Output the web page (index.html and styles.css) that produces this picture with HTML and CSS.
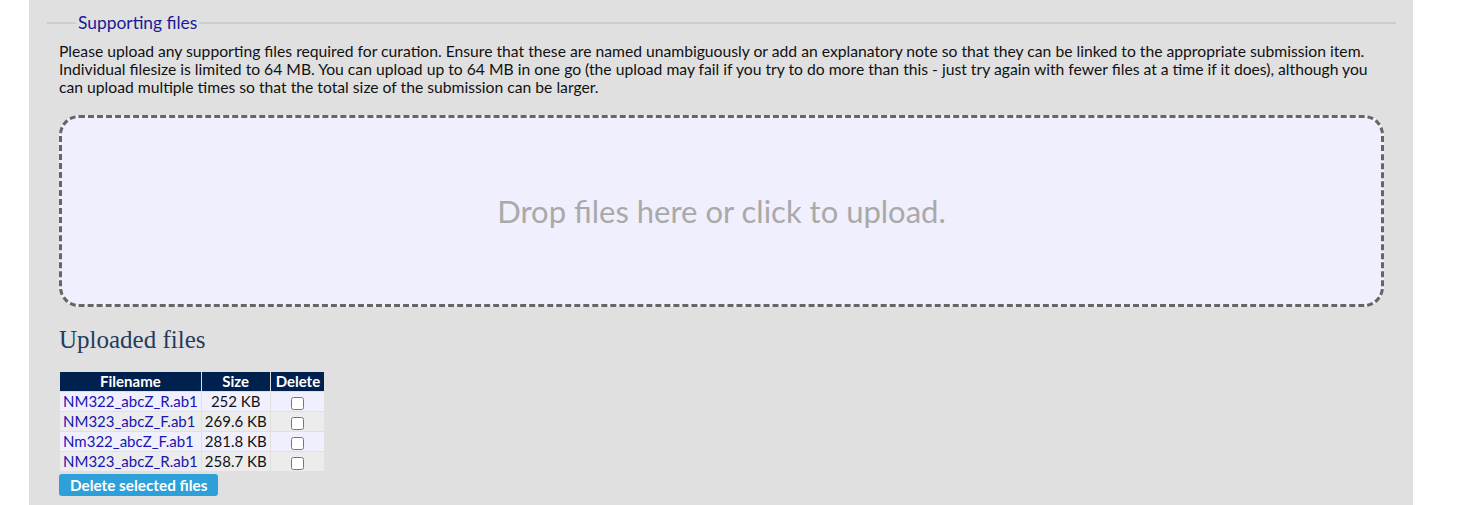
FILE: index.html
```html
<!DOCTYPE html>
<html lang="en">
<head>
<meta charset="utf-8">
<title>Supporting files</title>
<link rel="stylesheet" href="styles.css">
</head>
<body>
<div class="panel">
  <fieldset class="files">
    <legend>Supporting files</legend>
    <p class="note">Please upload any supporting files required for curation. Ensure that these are named unambiguously or add an explanatory note so that they can be linked to the appropriate submission item. Individual filesize is limited to 64 MB. You can upload up to 64 MB in one go (the upload may fail if you try to do more than this - just try again with fewer files at a time if it does), although you can upload multiple times so that the total size of the submission can be larger.</p>
    <div class="dropzone">Drop files here or click to upload.</div>
    <h2 class="uploaded">Uploaded files</h2>
    <table class="filetable">
      <thead>
        <tr><th class="c-name">Filename</th><th class="c-size">Size</th><th class="c-del">Delete</th></tr>
      </thead>
      <tbody>
        <tr class="odd"><td><a href="#">NM322_abcZ_R.ab1</a></td><td class="size">252 KB</td><td class="del"><input type="checkbox"></td></tr>
        <tr class="even"><td><a href="#">NM323_abcZ_F.ab1</a></td><td class="size">269.6 KB</td><td class="del"><input type="checkbox"></td></tr>
        <tr class="odd"><td><a href="#">Nm322_abcZ_F.ab1</a></td><td class="size">281.8 KB</td><td class="del"><input type="checkbox"></td></tr>
        <tr class="even"><td><a href="#">NM323_abcZ_R.ab1</a></td><td class="size">258.7 KB</td><td class="del"><input type="checkbox"></td></tr>
      </tbody>
    </table>
    <button class="delbtn" type="button">Delete selected files</button>
  </fieldset>
</div>
</body>
</html>
```
FILE: styles.css
```css
html, body {
  margin: 0;
  padding: 0;
  background: #ffffff;
}
body {
  font-family: Lato, "Open Sans", sans-serif;
  color: #111;
}
.panel {
  margin-left: 29px;
  width: 1384px;
  height: 505px;
  background: #e0e0e0;
  padding-top: 13px;
  box-sizing: border-box;
  overflow: hidden;
}
.files {
  margin: 0 17px 0 18px;
  border: none;
  border-top: 2px solid #cccccc;
  padding: 0 12px 0 12px;
}
.files legend {
  margin-left: 17px;
  padding: 0 2px;
  font-size: 17.4px;
  line-height: 20px;
  color: #1a1a96;
}
.note {
  margin: 9px 0 0 0;
  font-size: 15.7px;
  line-height: 18px;
}
.dropzone {
  margin-top: 19px;
  height: 186px;
  border: 3px dashed #666666;
  border-radius: 20px;
  background: #f0effd;
  display: flex;
  align-items: center;
  justify-content: center;
  color: #a9a9a9;
  font-size: 31px;
}
.uploaded {
  font-family: "Liberation Serif", serif;
  font-weight: normal;
  font-size: 25px;
  color: #253b5b;
  margin: 18px 0 16px 0;
  line-height: 30px;
}
.filetable {
  border-spacing: 1px;
  margin-left: 0;
  font-size: 15px;
}
.filetable th {
  background: #00214d;
  color: #ffffff;
  font-weight: bold;
  padding: 0 4px;
  height: 19px;
  line-height: 17px;
}
.filetable th.c-size { padding: 0 5px; }
.filetable th.c-del { padding: 0 4px 0 5px; }
.filetable td {
  padding: 0 3px;
  height: 19px;
  line-height: 17px;
}
.filetable .odd td { background: #f0effd; }
.filetable .even td { background: #ececec; }
.filetable a {
  color: #1616b4;
  text-decoration: none;
}
.filetable .size { text-align: center; }
.filetable .del { text-align: center; }
.filetable input {
  margin: 0;
  width: 13px;
  height: 13px;
  vertical-align: middle;
}
.delbtn {
  display: block;
  margin-top: 2px;
  background: #2d9fd9;
  color: #ffffff;
  border: none;
  border-radius: 3px;
  font-family: Lato, sans-serif;
  font-weight: bold;
  font-size: 15.3px;
  padding: 2px 11px;
  height: 22px;
}
```
